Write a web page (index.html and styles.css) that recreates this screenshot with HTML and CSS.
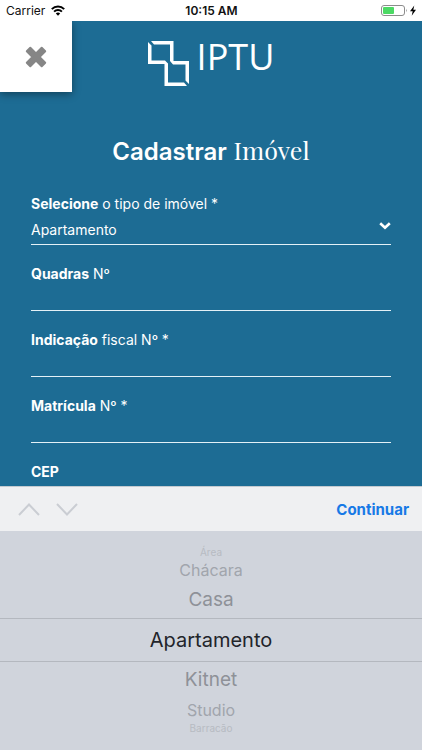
FILE: index.html
```html
<!DOCTYPE html>
<html lang="pt-BR">
<head>
<meta charset="utf-8">
<meta name="viewport" content="width=device-width, initial-scale=1">
<title>Cadastrar Imóvel</title>
<link rel="stylesheet" href="styles.css">
</head>
<body>
<div class="status">
  <div class="status-left">
    <span>Carrier</span>
    <svg width="14" height="11" viewBox="0 0 14 11" fill="none" stroke="#000" stroke-width="2" aria-hidden="true">
      <path d="M.8 4.1a8.8 8.8 0 0 1 12.4 0M3.1 6.6a5.5 5.5 0 0 1 7.8 0"/>
      <path d="M7 10.8 4.8 8.5a3.2 3.2 0 0 1 4.4 0z" fill="#000" stroke="none"/>
    </svg>
  </div>
  <time class="status-time">10:15 AM</time>
  <div class="status-right">
    <svg width="36" height="12" viewBox="0 0 36 12" aria-hidden="true">
      <rect x=".5" y=".5" width="23" height="10" rx="2.5" fill="#fff" stroke="#8c8c8c"/>
      <rect x="2" y="2" width="11" height="7" rx="1" fill="#4cd964"/>
      <path d="M25 3.7q1.6 1.8 0 3.6z" fill="#8c8c8c"/>
      <path d="M33.3.5 29 6.3h2.7l-1 4.5L35 4.7h-2.7z" fill="#000"/>
    </svg>
  </div>
</div>

<main class="page">
  <header class="header">
    <button class="close" type="button" aria-label="Fechar">
      <svg width="22" height="22" viewBox="0 0 22 22" aria-hidden="true">
        <path d="M5.300 1.800 11 7.500l5.700-5.700 3.500 3.500L14.500 11l5.700 5.700-3.500 3.500L11 14.500l-5.700 5.700-3.500-3.500L7.500 11 1.800 5.300z" fill="#868686" stroke="#868686" stroke-width="2" stroke-linejoin="round"/>
      </svg>
    </button>
    <div class="logo">
      <svg width="41" height="45" viewBox="0 0 41 45" fill="#fff" aria-hidden="true">
        <path d="M3 0h22.500v20H41v23l-3.500-3.500v-16H25L22 20V3.500H6z"/>
        <path d="M0 1l3.500 3.500v15H17l3 3v19h16l3 3.500H16.500V23H0z"/>
      </svg>
      <span class="logo-text">IPTU</span>
    </div>
  </header>

  <h1 class="title"><strong>Cadastrar</strong> <span class="serif">Imóvel</span></h1>

  <form class="form">
    <div class="field">
      <label for="tipo"><strong>Selecione</strong> o tipo de imóvel *</label>
      <div class="select-wrap">
        <select id="tipo">
          <option>Apartamento</option>
          <option>Casa</option>
          <option>Kitnet</option>
        </select>
        <svg class="chevron" width="12" height="8" viewBox="0 0 12 8" fill="none" stroke="#fff" stroke-width="2.600" aria-hidden="true"><path d="M1.200 1.200 6 5.800l4.800-4.600"/></svg>
      </div>
    </div>
    <div class="field">
      <label for="quadras"><strong>Quadras</strong> Nº</label>
      <input id="quadras" type="text">
    </div>
    <div class="field">
      <label for="fiscal"><strong>Indicação</strong> fiscal Nº *</label>
      <input id="fiscal" type="text">
    </div>
    <div class="field">
      <label for="matricula"><strong>Matrícula</strong> Nº *</label>
      <input id="matricula" type="text">
    </div>
    <div class="field">
      <label for="cep"><strong>CEP</strong></label>
      <input id="cep" type="text">
    </div>
  </form>
</main>

<section class="picker" aria-label="Tipo de imóvel">
  <div class="toolbar">
    <button class="step" type="button" aria-label="Campo anterior">
      <svg width="22" height="13" viewBox="0 0 22 13" aria-hidden="true"><path d="M1 12 11 1.500 21 12"/></svg>
    </button>
    <button class="step" type="button" aria-label="Próximo campo">
      <svg width="22" height="13" viewBox="0 0 22 13" aria-hidden="true"><path d="M1 1l10 10.500L21 1"/></svg>
    </button>
    <button class="done" type="button">Continuar</button>
  </div>
  <ul class="wheel" role="listbox" aria-label="Tipo de imóvel">
    <li class="far" role="option">Área</li>
    <li class="mid" role="option">Chácara</li>
    <li class="near" role="option">Casa</li>
    <li class="current" role="option" aria-selected="true">Apartamento</li>
    <li class="near" role="option">Kitnet</li>
    <li class="mid" role="option">Studio</li>
    <li class="far" role="option">Barracão</li>
  </ul>
</section>
</body>
</html>
```
FILE: styles.css
```css
* {
  box-sizing: border-box;
}

body {
  margin: 0;
  height: 100vh;
  display: flex;
  flex-direction: column;
  overflow: hidden;
  background: #1d6c94;
  color: #fff;
  font-family: Inter, "Liberation Sans", sans-serif;
  font-size: 14px;
}

button,
input,
select {
  font: inherit;
  color: inherit;
  border: 0;
  border-radius: 0;
  padding: 0;
  background: none;
}

svg {
  display: block;
  flex: none;
}

strong {
  font-weight: 700;
}

.status {
  flex: none;
  display: grid;
  grid-template-columns: 1fr auto 1fr;
  align-items: center;
  padding: 0 5px 0 6px;
  line-height: 21px;
  font-size: 12px;
  background: #fff;
  color: #111;
}

.status-left {
  display: flex;
  align-items: center;
  gap: 6px;
}

.status-time {
  font-weight: 600;
}

.status-right {
  display: flex;
  justify-content: flex-end;
}

.page {
  flex: 1;
  min-height: 0;
  overflow: hidden;
}

.header {
  display: grid;
  grid-template-columns: 72px 1fr 72px;
}

.close {
  height: 71px;
  display: flex;
  align-items: center;
  justify-content: center;
  background: #fff;
  box-shadow: 0 2px 8px rgba(0, 0, 0, 0.4);
}

.logo {
  display: flex;
  justify-content: center;
  gap: 8px;
  padding-top: 20px;
}

.logo-text {
  font-family: "Open Sans", "Noto Sans", sans-serif;
  font-size: 36px;
  line-height: 32px;
}

.title {
  margin: 38px 0 0;
  text-align: center;
  font-size: 24px;
  line-height: 40px;
  font-weight: 400;
}

.title strong {
  font-weight: 600;
}

.serif {
  font-family: "Playfair Display", "Liberation Serif", serif;
  font-size: 25px;
}

.form {
  padding: 22px 31px 0;
}

.field {
  display: flex;
  flex-direction: column;
  margin-bottom: 19px;
}

.field label {
  line-height: 20px;
}

.field input {
  height: 27px;
  border-bottom: 1px solid #e4f1f7;
}

.select-wrap {
  display: flex;
  align-items: center;
  height: 31px;
  border-bottom: 1px solid #e4f1f7;
}

.select-wrap select {
  flex: 1;
  height: 28px;
  appearance: none;
}

.chevron {
  margin-bottom: 6px;
  pointer-events: none;
}

.picker {
  flex: none;
  background: #d0d4dc;
}

.toolbar {
  display: flex;
  align-items: center;
  gap: 16px;
  height: 45px;
  padding: 0 13px 0 18px;
  border-top: 1px solid #c3cad0;
  background: #eff0f2;
}

.step path {
  fill: none;
  stroke: #cacdd3;
  stroke-width: 2;
}

.done {
  margin-left: auto;
  color: #1779e6;
  font-size: 15px;
  font-weight: 700;
}

.wheel {
  margin: 0;
  padding: 15px 0 16px;
  list-style: none;
  text-align: center;
}

.far {
  font-size: 10px;
  line-height: 12px;
  color: #b7bbc2;
}

.mid {
  font-size: 16px;
  line-height: 24px;
  color: #a1a5ac;
}

.near {
  font-size: 19px;
  line-height: 36px;
  color: #8e9198;
}

.current {
  border-top: 1px solid #b4b8bf;
  border-bottom: 1px solid #b4b8bf;
  font-size: 20px;
  line-height: 42px;
  color: #22242a;
}
```
